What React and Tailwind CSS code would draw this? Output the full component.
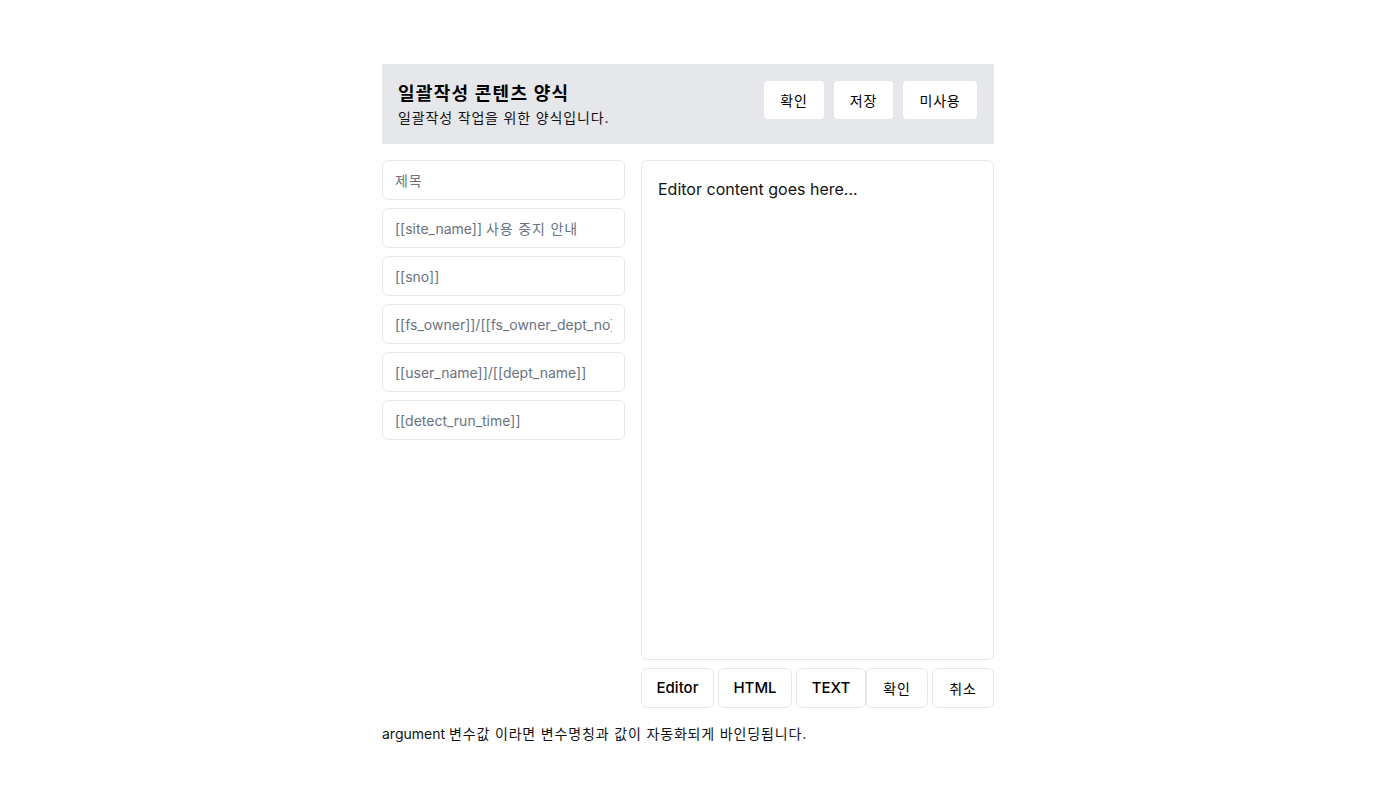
function K({ children, t = "tracking-[0.06em]" }) {
  const parts = String(children).split(/([\u3131-\uD79D][\u3131-\uD79D\s.]*)/);
  return (
    <>
      {parts.map((p, i) =>
        /[\u3131-\uD79D]/.test(p) ? (
          <span key={i} className={t}>
            {p}
          </span>
        ) : (
          <span key={i}>{p}</span>
        )
      )}
    </>
  );
}

export default function App() {
  const fields = [
    "제목",
    "[[site_name]] 사용 중지 안내",
    "[[sno]]",
    "[[fs_owner]]/[[fs_owner_dept_no]]",
    "[[user_name]]/[[dept_name]]",
    "[[detect_run_time]]",
  ];
  const font = { fontFamily: 'Inter, "Noto Sans CJK KR", sans-serif' };
  return (
    <div className="min-h-screen bg-white text-black" style={font}>
      <div className="mx-auto w-[612px] pt-16">
        <div className="flex items-start justify-between bg-[#e5e7eb] py-4 pl-4 pr-[17px]">
          <div className="flex flex-col">
            <div className="text-[18px] font-bold leading-7">
              <K t="tracking-[0.07em]">일괄작성 콘텐츠 양식</K>
            </div>
            <div className="text-[14px] leading-5 text-[#111]">
              <K>일괄작성 작업을 위한 양식입니다.</K>
            </div>
          </div>
          <div className="mt-px flex gap-[10px] text-[14px]">
            <button className="h-[38px] w-[60px] rounded bg-white"><K>확인</K></button>
            <button className="h-[38px] w-[59px] rounded bg-white"><K>저장</K></button>
            <button className="h-[38px] w-[74px] rounded bg-white"><K>미사용</K></button>
          </div>
        </div>
        <div className="mt-4 flex gap-4">
          <div className="flex w-[243px] flex-col gap-2">
            {fields.map((f) => (
              <div
                key={f}
                className="flex h-10 items-center rounded-md border border-[#e5e7eb] pl-3 pr-3 text-[14px] text-[#6b7280]"
              >
                <div className="w-full overflow-hidden whitespace-nowrap">
                  <K>{f}</K>
                </div>
              </div>
            ))}
          </div>
          <div className="flex w-[353px] flex-col">
            <div className="h-[500px] rounded-md border border-[#e5e7eb] px-4 py-4 text-[16px] leading-6 text-[#111]">
              Editor content goes here...
            </div>
            <div className="mt-2 flex">
              <button className="h-10 w-[73px] rounded-md border border-[#e5e7eb] text-[15px] font-medium">Editor</button>
              <button className="ml-1 h-10 w-[74px] rounded-md border border-[#e5e7eb] text-[15px] font-medium">HTML</button>
              <button className="ml-1 h-10 w-[70px] rounded-md border border-[#e5e7eb] text-[15px] font-medium">TEXT</button>
              <button className="h-10 w-[62px] rounded-md border border-[#e5e7eb] text-[14px]"><K>확인</K></button>
              <button className="ml-1 h-10 w-[62px] rounded-md border border-[#e5e7eb] text-[14px]"><K>취소</K></button>
            </div>
          </div>
        </div>
        <div className="mt-4 text-[14px] leading-5 text-[#111]">
          <K>argument 변수값 이라면 변수명칭과 값이 자동화되게 바인딩됩니다.</K>
        </div>
      </div>
    </div>
  );
}
